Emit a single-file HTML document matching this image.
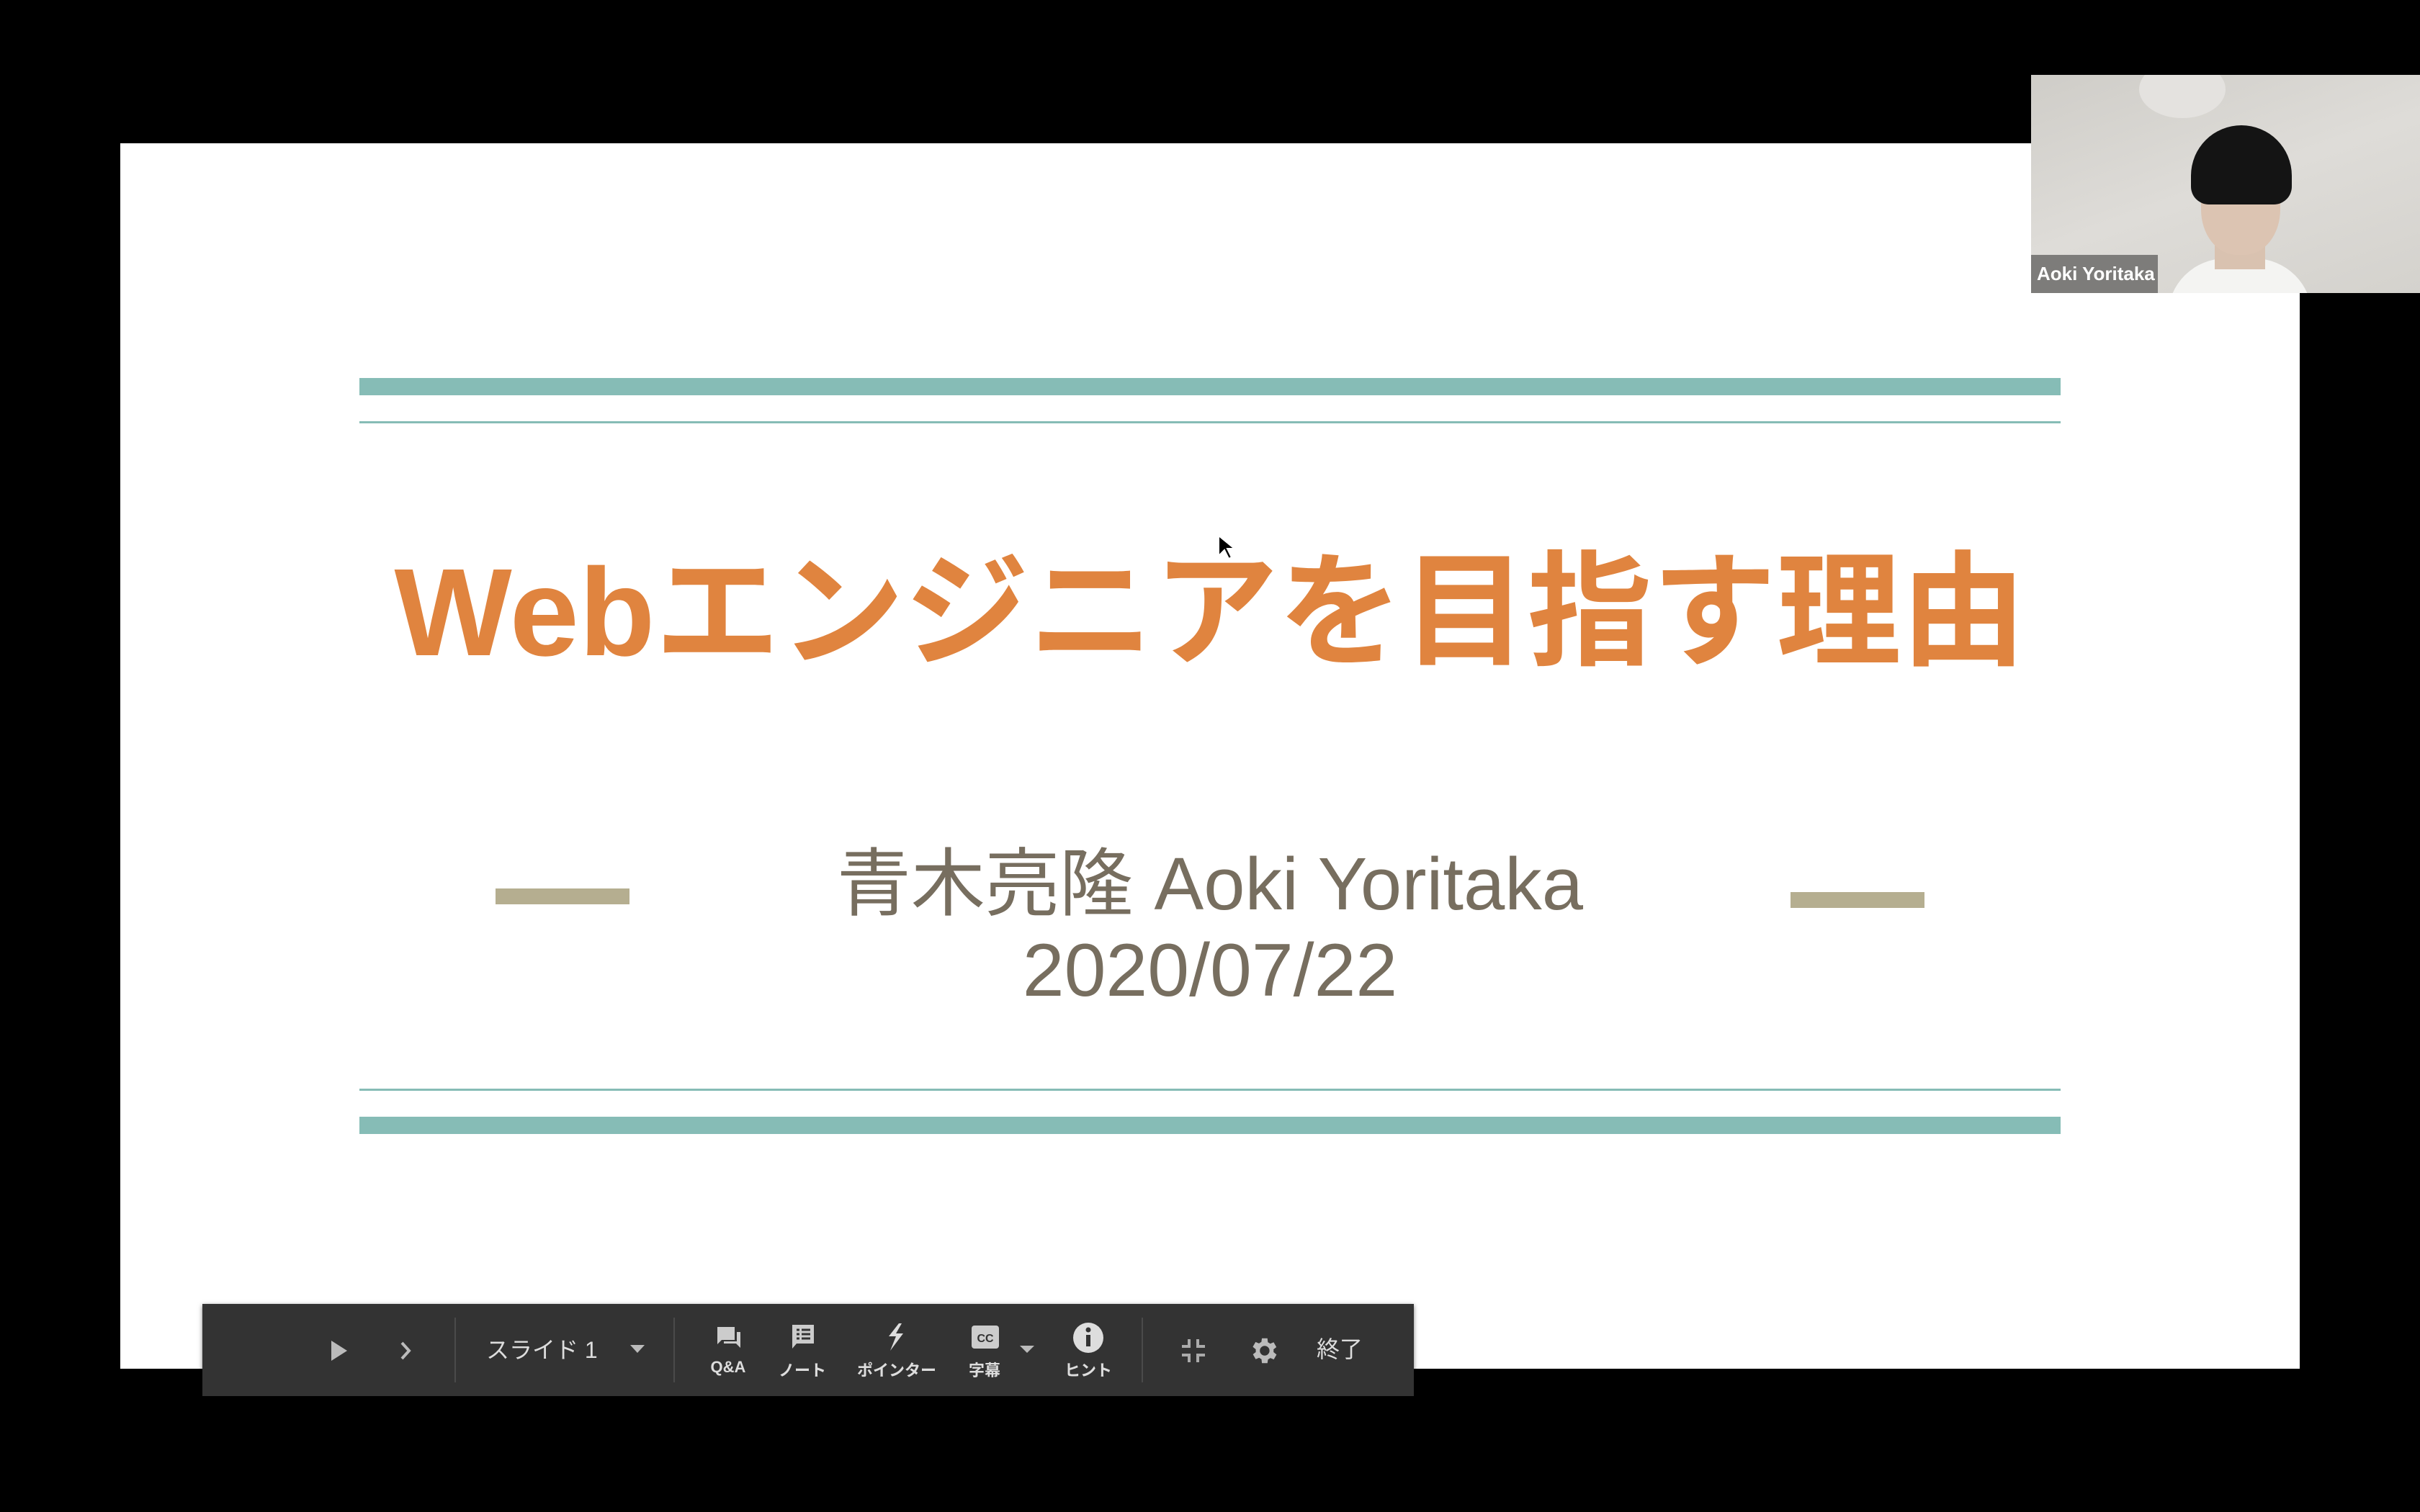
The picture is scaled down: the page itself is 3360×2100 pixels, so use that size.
<!DOCTYPE html>
<html><head><meta charset="utf-8"><style>
body{margin:0;width:3360px;height:2100px;background:#000;position:relative;overflow:hidden;font-family:"Liberation Sans","Noto Sans CJK JP",sans-serif}
.a{position:absolute}
.slide{left:167px;top:199px;width:3026px;height:1702px;background:#fff}
.teal{background:#86bcb6}
.tan{background:#b5ae90}
.t{white-space:nowrap;text-align:center}
.tb{left:281px;top:1811px;width:1682px;height:128px;background:#333;box-shadow:0 2px 6px rgba(0,0,0,.5)}
.lbl{color:#ddd;font-size:22px;font-weight:bold;transform:translateX(-50%);top:1886px}
.dv{width:2px;height:90px;top:1830px;background:#4a4a4a}
</style></head><body>
<div class="a slide"></div>
<div class="a teal" style="left:499px;top:525px;width:2362px;height:24px"></div>
<div class="a teal" style="left:499px;top:585px;width:2362px;height:3px"></div>
<div class="a teal" style="left:499px;top:1512px;width:2362px;height:3px"></div>
<div class="a teal" style="left:499px;top:1551px;width:2362px;height:24px"></div>
<div class="a tan" style="left:688px;top:1234px;width:186px;height:22px"></div>
<div class="a tan" style="left:2486px;top:1239px;width:186px;height:22px"></div>
<div class="a t" style="left:0;width:3360px;top:730px;font-size:173px;font-weight:bold;color:#e0843f;line-height:240px">Webエンジニアを目指す理由</div>
<div class="a t" style="left:0;width:3360px;top:1168px;font-size:103px;color:#776e5f;line-height:120px">青木亮隆 Aoki Yoritaka</div>
<div class="a t" style="left:0;width:3360px;top:1288px;font-size:104px;color:#776e5f;line-height:120px">2020/07/22</div>
<svg class="a" style="left:1690px;top:742px" width="24" height="36" viewBox="0 0 12 18"><path d="M1 1v14l4-4 3 6 2-1-3-6h5z" fill="#000" stroke="#fff" stroke-width="1"/></svg>
<!-- webcam -->
<div class="a" style="left:2820px;top:104px;width:540px;height:303px;background:linear-gradient(160deg,#cfcdc8,#dedcd8 50%,#d4d2cd);overflow:hidden">
<div class="a" style="left:150px;top:-20px;width:120px;height:80px;border-radius:50%;background:#e4e2df"></div>
<div class="a" style="left:190px;top:255px;width:200px;height:120px;border-radius:80px 80px 0 0;background:#f4f4f2"></div>
<div class="a" style="left:255px;top:200px;width:70px;height:70px;background:#d9c2b0"></div>
<div class="a" style="left:236px;top:110px;width:110px;height:140px;border-radius:45%;background:#dcc4b2"></div>
<div class="a" style="left:222px;top:70px;width:140px;height:110px;border-radius:70px 70px 25px 25px;background:#141414"></div>
<div class="a" style="left:0;top:250px;width:176px;height:53px;background:#7d7c7a"></div>
<div class="a" style="left:8px;top:258px;color:#fff;font-weight:bold;font-size:26px;line-height:36px">Aoki Yoritaka</div>
</div>
<!-- toolbar -->
<div class="a tb"></div>
<svg class="a" style="left:458px;top:1860px" width="26" height="32"><path d="M2 2l22 14L2 30z" fill="#bbb"/></svg>
<svg class="a" style="left:554px;top:1862px" width="20" height="28"><path d="M4 3l10 11L4 25" fill="none" stroke="#bbb" stroke-width="4"/></svg>
<div class="a dv" style="left:631px"></div>
<div class="a" style="left:675px;top:1855px;color:#ddd;font-size:32px;line-height:40px">スライド 1</div>
<svg class="a" style="left:873px;top:1866px" width="24" height="14"><path d="M2 2h20l-10 11z" fill="#bbb"/></svg>
<div class="a dv" style="left:935px"></div>
<svg class="a" style="left:993px;top:1840px" width="38" height="34"><path d="M3 3h24v18H9l-6 6z" fill="#ccc"/><path d="M30 10h5v22l-6-6H12v-3h18z" fill="#ccc"/></svg>
<svg class="a" style="left:1098px;top:1838px" width="34" height="38"><path d="M2 2h30v26H8l-6 7z" fill="#ccc"/><path d="M8 9h4M15 9h12M8 15h4M15 15h12M8 21h4M15 21h12" stroke="#333" stroke-width="3"/></svg>
<svg class="a" style="left:1228px;top:1836px" width="32" height="42"><path d="M20 2L6 20h10L8 40l18-24H16l8-14z" fill="#ddd"/></svg>
<svg class="a" style="left:1348px;top:1840px" width="40" height="34"><rect x="1" y="1" width="38" height="32" rx="4" fill="#ccc"/><text x="20" y="24" font-size="16" font-weight="bold" fill="#333" text-anchor="middle" font-family="Liberation Sans">CC</text></svg>
<svg class="a" style="left:1415px;top:1868px" width="22" height="12"><path d="M1 1h20l-10 10z" fill="#bbb"/></svg>
<svg class="a" style="left:1489px;top:1836px" width="44" height="44"><circle cx="22" cy="22" r="21" fill="#ddd"/><rect x="19" y="18" width="6" height="16" fill="#333"/><circle cx="22" cy="11" r="3.5" fill="#333"/></svg>
<div class="a lbl" style="left:1011px">Q&amp;A</div>
<div class="a lbl" style="left:1114px">ノート</div>
<div class="a lbl" style="left:1245px">ポインター</div>
<div class="a lbl" style="left:1367px">字幕</div>
<div class="a lbl" style="left:1511px">ヒント</div>
<div class="a dv" style="left:1585px"></div>
<svg class="a" style="left:1639px;top:1858px" width="36" height="36"><path d="M12 2v10H2M24 2v10h10M12 34V24H2M24 34V24h10" fill="none" stroke="#aaa" stroke-width="4"/></svg>
<svg class="a" style="left:1731px;top:1853px" width="46" height="46" viewBox="0 0 24 24"><path fill="#bbb" d="M19.4 13a7.5 7.5 0 000-2l2.1-1.6-2-3.5-2.5 1a7 7 0 00-1.7-1L15 3h-4l-.4 2.7a7 7 0 00-1.7 1l-2.5-1-2 3.5L6.6 11a7.5 7.5 0 000 2l-2.1 1.6 2 3.5 2.5-1a7 7 0 001.7 1L11 21h4l.4-2.7a7 7 0 001.7-1l2.5 1 2-3.5zM13 15.5a3.5 3.5 0 110-7 3.5 3.5 0 010 7z"/></svg>
<div class="a" style="left:1828px;top:1854px;color:#ddd;font-size:32px;line-height:40px">終了</div>
</body></html>
